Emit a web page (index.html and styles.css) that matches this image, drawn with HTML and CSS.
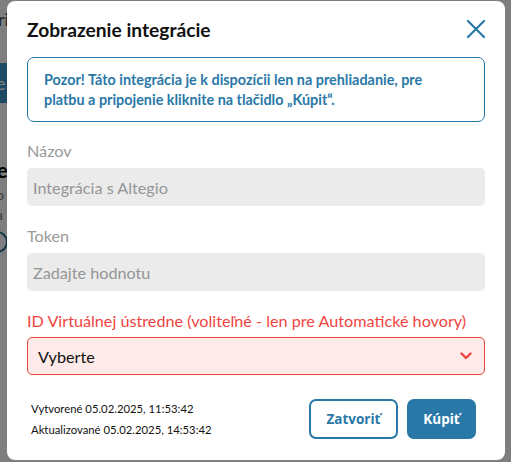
FILE: index.html
```html
<!DOCTYPE html>
<html lang="sk">
<head>
<meta charset="utf-8">
<link rel="stylesheet" href="styles.css">
</head>
<body>
<div class="page">
  <div class="bg-text bg-ri">ri</div>
  <div class="bg-bar">e</div>
  <div class="bg-bold">e</div>
  <div class="bg-small bg-o">o</div>
  <div class="bg-small bg-a">a</div>
  <div class="bg-circle"></div>
</div>
<div class="overlay"></div>
<div class="modal">
  <div class="modal-header">
    <h1 class="modal-title">Zobrazenie integrácie</h1>
    <svg class="close" width="20" height="20" viewBox="0 0 20 20"><path d="M2 2 L18 18 M18 2 L2 18" stroke="#2a78a8" stroke-width="2.2" fill="none" stroke-linecap="round"/></svg>
  </div>
  <div class="alert">Pozor! Táto integrácia je k dispozícii len na prehliadanie, pre platbu a pripojenie kliknite na tlačidlo „Kúpit“.</div>
  <div class="field">
    <div class="label">Názov</div>
    <div class="input">Integrácia s Altegio</div>
  </div>
  <div class="field">
    <div class="label">Token</div>
    <div class="input">Zadajte hodnotu</div>
  </div>
  <div class="field field-select">
    <div class="label label-error">ID Virtuálnej ústredne (voliteľné - len pre Automatické hovory)</div>
    <div class="select">
      <span>Vyberte</span>
      <svg width="12" height="8" viewBox="0 0 12 8"><path d="M1.5 1.5 L6 6 L10.5 1.5" stroke="#f0443e" stroke-width="2.4" fill="none" stroke-linecap="round" stroke-linejoin="round"/></svg>
    </div>
  </div>
  <div class="footer">
    <div class="dates">
      <div>Vytvorené 05.02.2025, 11:53:42</div>
      <div>Aktualizované 05.02.2025, 14:53:42</div>
    </div>
    <div class="buttons">
      <button class="btn btn-outline">Zatvoriť</button>
      <button class="btn btn-primary">Kúpiť</button>
    </div>
  </div>
</div>
</body>
</html>
```
FILE: styles.css
```css
* { box-sizing: border-box; }
html, body { margin: 0; padding: 0; }
body {
  width: 511px;
  height: 462px;
  overflow: hidden;
  position: relative;
  background: #fdfdfd;
  font-family: "Lato", "Noto Sans", sans-serif;
}
.page { position: relative; width: 511px; height: 462px; }
.bg-text { position: absolute; left: -2px; top: 8px; font-size: 18px; color: #444; }
.bg-bar { position: absolute; left: 0; top: 63px; width: 40px; height: 40px; background: #3f95c7; color: #fff; font-size: 18px; line-height: 40px; text-indent: -4px; }
.bg-bold { position: absolute; left: -3px; top: 158px; font-size: 20px; font-weight: 700; color: #000; }
.bg-small { position: absolute; left: -4px; font-size: 14px; color: #777; }
.bg-o { top: 186px; }
.bg-a { top: 206px; }
.bg-circle { position: absolute; left: -14px; top: 231px; width: 22px; height: 22px; border: 2px solid #2c6e96; border-radius: 50%; }
.overlay { position: absolute; inset: 0; background: rgba(0,0,0,0.5); }
.modal {
  position: absolute;
  left: 7px;
  top: 1px;
  width: 498px;
  height: 459px;
  background: #fff;
  border-radius: 8px;
  padding: 14px 20px 0 20px;
  display: flex;
  flex-direction: column;
}
.modal-header { display: flex; justify-content: space-between; align-items: center; height: 28px; }
.modal-title {
  margin: 0;
  font-family: "Lato", sans-serif;
  font-weight: 700;
  font-size: 19.2px;
  color: #111;
}
.close { margin-right: -1px; }
.alert {
  margin-top: 14px;
  border: 1px solid #2a78a8;
  border-radius: 7px;
  padding: 12px 50px 10px 16px;
  color: #2a78a8;
  font-weight: 700;
  font-size: 14.4px;
  line-height: 20px;
  height: 65px;
}
.field { margin-top: 19px; }
.field + .field { margin-top: 20px; }
.field-select .label { margin-bottom: 6px; }
.label { font-size: 16.2px; color: #9a9a9a; line-height: 20px; margin-bottom: 7px; }
.label-error { color: #f0443e; }
.input {
  height: 38px;
  background: #ebebeb;
  border-radius: 5px;
  padding: 0 6px;
  font-size: 16.2px;
  color: #959595;
  display: flex;
  align-items: center;
}
.select {
  height: 38px;
  background: #ffeaea;
  border: 1px solid #f0443e;
  border-radius: 5px;
  padding: 0 12px 0 10px;
  font-size: 16.2px;
  color: #111;
  display: flex;
  align-items: center;
  justify-content: space-between;
}
.footer { display: flex; justify-content: space-between; align-items: center; margin-top: 23px; }
.dates { font-size: 11.3px; color: #111; line-height: 21px; padding-left: 4px; }
.buttons { display: flex; gap: 9px; margin-right: 9px; }
.btn {
  height: 40px;
  border-radius: 7px;
  font-family: "Open Sans", sans-serif;
  font-weight: 700;
  font-size: 13.5px;
  padding: 0 10px;
  cursor: pointer;
}
.btn-outline { background: #fff; border: 2px solid #2a78a8; color: #2a78a8; width: 89px; }
.btn-primary { background: #2a78a8; border: 2px solid #2a78a8; color: #fff; width: 69px; }
```
